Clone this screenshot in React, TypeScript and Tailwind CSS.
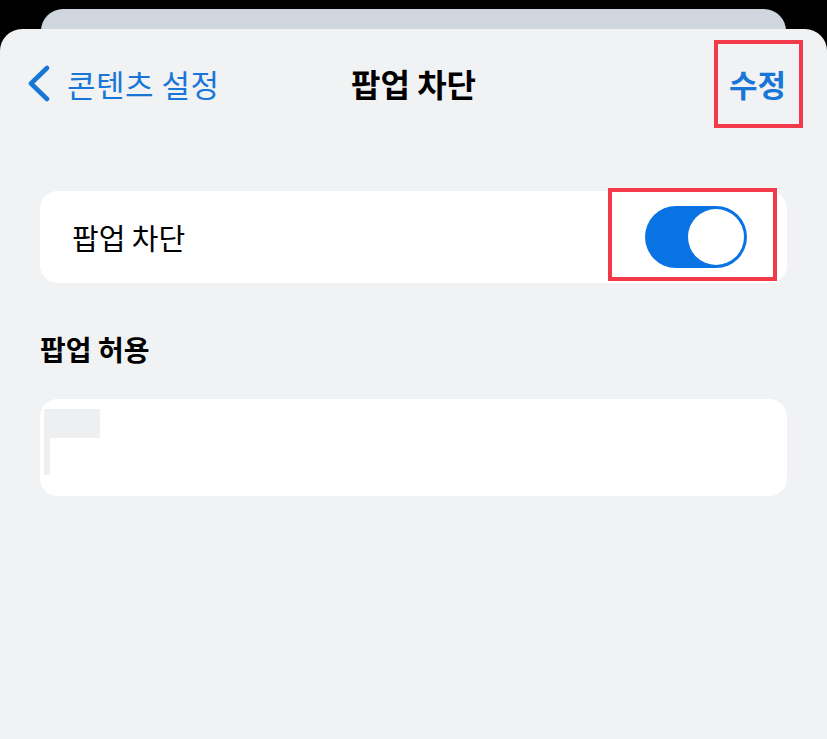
import React from "react";

const font = { fontFamily: '"Noto Sans CJK KR", "Noto Sans", sans-serif' };

export default function App() {
  return (
    <div
      className="w-[827px] h-[739px] bg-black flex flex-col pt-[9px] overflow-hidden"
      style={font}
    >
      <div className="mx-[41px] h-[40px] rounded-t-[22px] bg-[#cfd6de] shrink-0" />
      <div className="relative -mt-[20px] flex-1 rounded-t-[22px] bg-[#f1f2f4] flex flex-col">
        {/* Nav bar */}
        <div className="relative h-[112px] pb-[4px] grid grid-cols-[1fr_auto_1fr] items-center">
          <div className="flex items-center pl-[27px] gap-[17px] text-[#1877d6]">
            <svg width="23" height="37" viewBox="0 0 23 37" fill="none">
              <polyline
                points="20,3 4,18.5 20,34"
                stroke="#1877d6"
                strokeWidth="4.6"
                strokeLinecap="round"
                strokeLinejoin="round"
              />
            </svg>
            <span className="text-[31px] leading-none tracking-[0.5px]">콘텐츠 설정</span>
          </div>
          <div className="text-[32px] font-bold leading-none text-black">팝업 차단</div>
          <div className="flex justify-end pr-[41px]">
            <span className="text-[31px] font-semibold leading-none text-[#1877d6]">수정</span>
          </div>
          <div className="absolute left-[714px] top-[11px] w-[89px] h-[88px] border-[4px] border-[#f23a4b]" />
        </div>

        {/* Card 1 */}
        <div className="relative mt-[50px] mx-[40px] h-[92px] rounded-[18px] bg-white flex items-center justify-between pl-[32px] pr-[40px]">
          <span className="text-[29px] leading-none text-black">팝업 차단</span>
          <div className="w-[102px] h-[62px] rounded-full bg-[#0a73e3] flex items-center justify-end pr-[3px]">
            <div className="w-[56px] h-[56px] rounded-full bg-white" />
          </div>
          <div className="absolute left-[568px] top-[-3px] w-[169px] h-[93px] border-[4px] border-[#f23a4b]" />
        </div>

        {/* Section header */}
        <div className="mt-[52px] px-[40px] text-[28px] font-semibold leading-none text-black">
          팝업 허용
        </div>

        {/* Card 2 */}
        <div className="mt-[36px] mx-[40px] h-[97px] rounded-[18px] bg-white pt-[10px] pl-[4px]">
          <div className="w-[56px] h-[29px] bg-[#eeeff1]" />
          <div className="w-[6px] h-[37px] bg-[#eeeff1]" />
        </div>
      </div>
    </div>
  );
}
